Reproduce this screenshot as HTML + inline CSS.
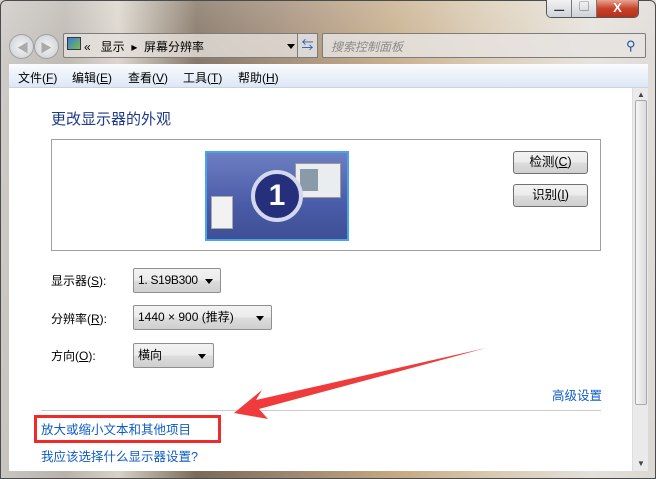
<!DOCTYPE html>
<html><head><meta charset="utf-8"><style>
*{margin:0;padding:0;box-sizing:border-box}
body{width:656px;height:479px;overflow:hidden;position:relative;font-family:"Liberation Sans","Noto Sans CJK SC",sans-serif;font-size:12px;color:#000;
background:linear-gradient(90deg,#c9c6c2 0%,#b8b2aa 10%,#d8d2c8 18%,#7a6a58 30%,#a08870 45%,#c3a882 60%,#d8c9b0 75%,#e4e0da 90%,#dcd8d4 100%)}
.abs{position:absolute}
.frame{left:0;top:0;width:656px;height:479px;background:linear-gradient(180deg,rgba(255,255,255,.25),rgba(255,255,255,.1) 60px,rgba(255,255,255,.0));}
.ctl{top:0;left:546px;width:93px;height:18px;border:1px solid #555;border-top:none;border-radius:0 0 5px 5px;display:flex;overflow:hidden}
.ctl div{height:100%;background:linear-gradient(#f2f2f2,#cfd3d8);border-right:1px solid #777;color:#333;text-align:center;font-size:10px;line-height:16px}
.menu{left:9px;top:64px;width:639px;height:24px;background:linear-gradient(#fafcff,#dde7f4);border-bottom:1px solid #c9d4e2}
.menu span{position:absolute;top:5px;font-size:12px}
.content{left:9px;top:88px;width:623px;height:383px;background:#fff}
.sb{left:632px;top:88px;width:16px;height:383px;background:#eaeaea;border-left:1px solid #ddd}
.lbl{font-size:12px}
.dd{border:1px solid #8e8f8f;border-radius:2px;background:linear-gradient(#f2f2f2 0%,#ebebeb 50%,#dddddd 51%,#cfcfcf 100%);height:25px;font-size:12px;line-height:23px;padding-left:4px;white-space:nowrap}
.dd:after{content:"";position:absolute;right:7px;top:10px;border:4px solid transparent;border-top:5px solid #000;border-bottom:0}
.btn{border:1px solid #707070;border-radius:3px;background:linear-gradient(#f2f2f2 0%,#ebebeb 50%,#dddddd 51%,#cfcfcf 100%);width:75px;height:23px;text-align:center;line-height:21px;font-size:12.5px}
.link{color:#0f5cc8;font-size:12.5px}
u{text-decoration:underline}
</style></head><body>
<div class="abs frame"></div>
<div class="abs" style="left:0;top:0;width:656px;height:479px;border:1px solid #4b4b4b;border-radius:6px 6px 0 0"></div>
<div class="abs ctl"><div style="width:26px">▁</div><div style="width:25px">▢</div><div style="width:42px;background:linear-gradient(#e8a493,#c7432b 50%,#b92f17);color:#fff;font-weight:bold;font-size:13px;border:none">X</div></div>
<div class="abs" style="left:9px;top:34px;width:25px;height:25px;border-radius:50%;background:radial-gradient(#f4f4f4,#c9ccd0);border:1px solid #9da1a6"></div>
<div class="abs" style="left:34px;top:34px;width:25px;height:25px;border-radius:50%;background:radial-gradient(#f4f4f4,#c9ccd0);border:1px solid #9da1a6"></div>
<div class="abs" style="left:17px;top:39px;color:#aaa;font-size:12px">◀</div>
<div class="abs" style="left:40px;top:39px;color:#aaa;font-size:12px">▶</div>
<div class="abs" style="left:63px;top:44px;border:3px solid transparent;border-top:4px solid #999"></div>
<div class="abs" style="left:63px;top:33px;width:255px;height:25px;background:rgba(230,225,220,.8);border:1px solid #7c7c7c;border-radius:2px"></div>
<div class="abs" style="left:67px;top:37px;width:14px;height:13px;background:linear-gradient(135deg,#3a7ad8,#76c04a);border:1px solid #335"></div>
<div class="abs" style="left:84px;top:38px;font-size:12px">«&nbsp;&nbsp; 显示 &nbsp;▸ &nbsp;屏幕分辨率</div>
<div class="abs" style="left:287px;top:44px;border:4px solid transparent;border-top:5px solid #000"></div>
<div class="abs" style="left:297px;top:33px;width:21px;height:25px;border:1px solid #7c7c7c;background:rgba(220,220,220,.6);color:#1f5fb8;text-align:center;line-height:23px;font-size:12px">⇆</div>
<div class="abs" style="left:322px;top:33px;width:324px;height:25px;background:rgba(230,227,224,.85);border:1px solid #7c7c7c;border-radius:2px"></div>
<div class="abs" style="left:331px;top:38px;color:#8a8a8a;font-style:italic;font-size:12px">搜索控制面板</div>
<div class="abs" style="left:626px;top:38px;color:#1e4f9a;font-size:13px">⚲</div>
<div class="abs menu">
<span style="left:9px">文件(<u>F</u>)</span><span style="left:63px">编辑(<u>E</u>)</span><span style="left:119px">查看(<u>V</u>)</span><span style="left:174px">工具(<u>T</u>)</span><span style="left:229px">帮助(<u>H</u>)</span>
</div>
<div class="abs content"></div>
<div class="abs sb"><div class="abs" style="left:2px;top:12px;width:12px;height:305px;background:linear-gradient(90deg,#f5f5f5,#dcdcdc);border:1px solid #a9a9a9;border-radius:2px"></div>
<div class="abs" style="left:4px;top:2px;font-size:8px;color:#444">▲</div><div class="abs" style="left:4px;top:371px;font-size:8px;color:#444">▼</div></div>
<div class="abs" style="left:51px;top:108px;color:#1e3a8a;font-size:15px">更改显示器的外观</div>
<div class="abs" style="left:51px;top:139px;width:550px;height:112px;border:1px solid #a0a0a0"></div>
<div class="abs" style="left:205px;top:151px;width:144px;height:90px;border:2px solid #4aa5e8;background:linear-gradient(#6d7ec2,#4a5ca8 60%,#3e4f96)"></div>
<div class="abs" style="left:295px;top:163px;width:46px;height:35px;background:#eaedf0;border:1px solid #999"><div style="margin:5px 0 0 4px;width:18px;height:22px;background:#8a9aa8"></div></div>
<div class="abs" style="left:211px;top:196px;width:22px;height:33px;background:#f2f2f2;border:1px solid #aaa"></div>
<div class="abs" style="left:251px;top:170px;width:52px;height:52px;border-radius:50%;background:#262f7c;border:4px solid #d4d8ec;color:#fff;font-weight:bold;font-size:30px;text-align:center;line-height:44px">1</div>
<div class="abs btn" style="left:513px;top:151px">检测(<u>C</u>)</div>
<div class="abs btn" style="left:513px;top:184px">识别(<u>I</u>)</div>
<div class="abs lbl" style="left:51px;top:272px">显示器(<u>S</u>):</div>
<div class="abs dd" style="left:133px;top:268px;width:88px;letter-spacing:-0.3px">1. S19B300</div>
<div class="abs lbl" style="left:51px;top:310px">分辨率(<u>R</u>):</div>
<div class="abs dd" style="left:133px;top:305px;width:139px">1440 × 900 (推荐)</div>
<div class="abs lbl" style="left:51px;top:347px">方向(<u>O</u>):</div>
<div class="abs dd" style="left:133px;top:343px;width:81px">横向</div>
<div class="abs link" style="left:552px;top:385px">高级设置</div>
<div class="abs" style="left:41px;top:410px;width:560px;height:1px;background:#ccc"></div>
<div class="abs" style="left:34px;top:415px;width:187px;height:28px;border:3px solid #ee2a2a"></div>
<div class="abs link" style="left:41px;top:419px">放大或缩小文本和其他项目</div>
<div class="abs link" style="left:41px;top:446px">我应该选择什么显示器设置?</div>
<svg class="abs" style="left:0;top:0" width="656" height="479"><polygon points="486,348 256,400 262,390 234,413 268,419 259,409" fill="#ef3b3b"/></svg>
</body></html>
